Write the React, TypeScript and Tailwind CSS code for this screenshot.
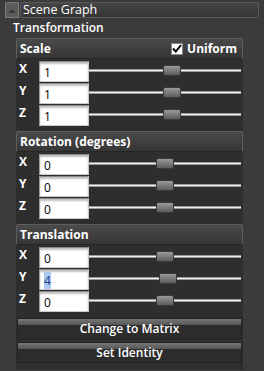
import React from "react";

const Row = ({ label, value, thumb, selected }: { label: string; value: string; thumb: number; selected?: boolean }) => (
  <div className="flex items-start h-[22px]">
    <div className="w-[23px] pl-[3px] pt-[1px] text-[12px] font-bold text-white leading-[14px]">{label}</div>
    <div className="w-[50px] h-[21px] bg-white border border-[#c8c8c8] border-t-[#8a8a8a] border-l-[#9a9a9a] shadow-[inset_0_2px_2px_rgba(0,0,0,0.25)] pl-[4px] pt-[4px] text-[12px] leading-[14px] text-black">
      {selected ? <span className="bg-[#a9c9f0] text-[#1a3c8a]">{value}</span> : value}
    </div>
    <div className="relative flex-1 h-[21px] mr-[2px]">
      <div className="absolute left-0 right-0 top-[8px] h-[3px] bg-[#f0f0f0] border-y border-[#9a9a9a]" />
      <div
        className="absolute top-[4px] w-[18px] h-[11px] rounded-[2px] border border-[#3a3a3a] bg-gradient-to-b from-[#9a9a9a] to-[#5c5c5c]"
        style={{ left: thumb - 89 }}
      />
    </div>
  </div>
);

const GroupHeader = ({ children }: { children: React.ReactNode }) => (
  <div className="h-[21px] flex items-center justify-between border border-[#5e5e5e] border-b-[#262626] rounded-t-[2px] bg-gradient-to-b from-[#4a4a4a] to-[#363636] px-[3px] text-[12px] font-bold text-white">
    {children}
  </div>
);

export default function App() {
  return (
    <div className="w-[264px] h-[371px] bg-[#3b3b3b] overflow-hidden" style={{ fontFamily: "'Open Sans', 'Liberation Sans', sans-serif" }}>
      <div className="flex pt-[2px] pl-[5px] pr-[5px] h-[20px]">
        <div className="w-[14px] h-[16px] bg-[#5c5c5c] border border-[#7a7a7a] flex items-center justify-center">
          <svg width="8" height="5" viewBox="0 0 8 5"><path d="M0 5 L4 1 L8 5 Z" fill="#3a3a3a" /></svg>
        </div>
        <div className="flex-1 h-[16px] ml-[1px] border border-[#5a5a5a] rounded-[2px] bg-gradient-to-b from-[#454545] to-[#353535] pl-[2px] text-[12.5px] leading-[14px] text-white">
          Scene Graph
        </div>
      </div>
      <div className="pl-[13px] h-[18px] text-[12px] font-semibold leading-[16px] text-white">Transformation</div>
      <div className="ml-[16px] w-[227px] bg-[#2e2e2e] pb-[1px]">
        <GroupHeader>
          <span>Scale</span>
          <span className="flex items-center gap-[4px] pr-[2px]">
            <span className="w-[12px] h-[12px] bg-white border border-[#888] flex items-center justify-center">
              <svg width="10" height="9" viewBox="0 0 10 9"><path d="M1 4.5 L3.8 7.5 L9 1" stroke="#000" strokeWidth="2" fill="none" /></svg>
            </span>
            <span>Uniform</span>
          </span>
        </GroupHeader>
        <div className="pt-[2px]">
          <Row label="X" value="1" thumb={163} />
          <Row label="Y" value="1" thumb={163} />
          <Row label="Z" value="1" thumb={163} />
        </div>
        <div className="h-[4px]" />
        <GroupHeader>
          <span>Rotation (degrees)</span>
        </GroupHeader>
        <div className="pt-[2px]">
          <Row label="X" value="0" thumb={156} />
          <Row label="Y" value="0" thumb={156} />
          <Row label="Z" value="0" thumb={156} />
        </div>
        <div className="h-[4px]" />
        <GroupHeader>
          <span>Translation</span>
        </GroupHeader>
        <div className="pt-[2px]">
          <Row label="X" value="0" thumb={156} />
          <Row label="Y" value="4" thumb={159} selected />
          <Row label="Z" value="0" thumb={156} />
        </div>
        <div className="h-[5px]" />
        <div className="flex flex-col gap-[3px] pb-[6px]">
          {["Change to Matrix", "Set Identity"].map((t) => (
            <div key={t} className="relative h-[21px] mx-[1px] border border-[#222] bg-[#2c2c2c] flex items-center justify-center text-[12px] font-semibold text-white">
              <div className="absolute left-0 right-0 top-0 h-[6px] bg-gradient-to-b from-[#777] to-[#555]" />
              <span className="relative">{t}</span>
            </div>
          ))}
        </div>
      </div>
    </div>
  );
}
